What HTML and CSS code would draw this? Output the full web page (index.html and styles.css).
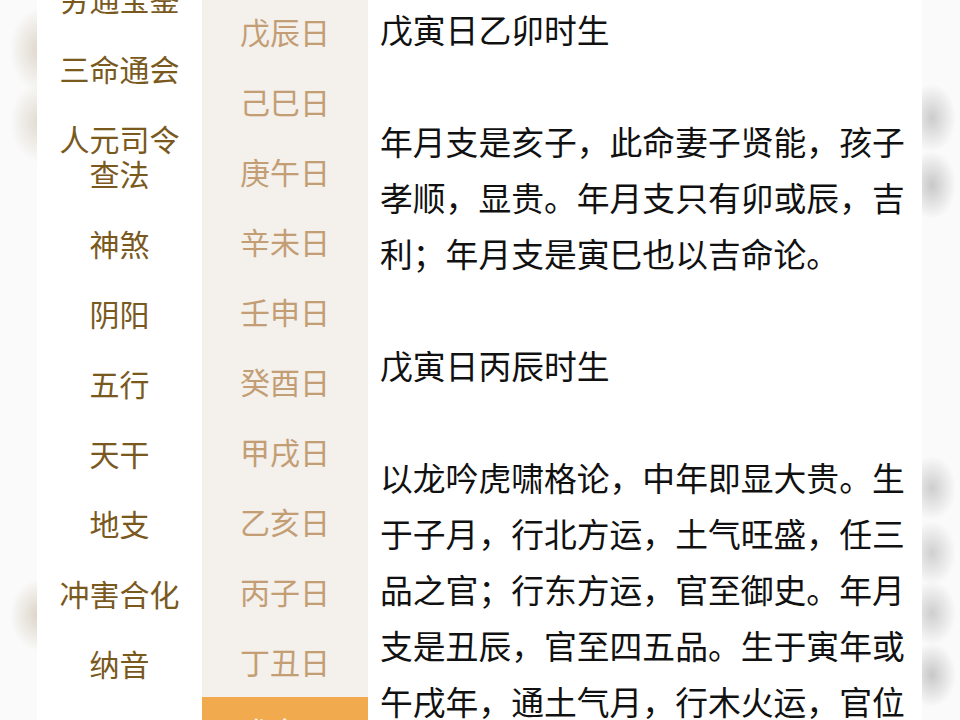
FILE: index.html
```html
<!DOCTYPE html>
<html lang="zh-CN">
<head>
<meta charset="utf-8">
<title>戊寅日</title>
<link rel="stylesheet" href="styles.css">
</head>
<body>
<div class="page">
  <nav class="books">
    <div class="book">穷通宝鉴</div>
    <div class="book">三命通会</div>
    <div class="book">人元司令查法</div>
    <div class="book">神煞</div>
    <div class="book">阴阳</div>
    <div class="book">五行</div>
    <div class="book">天干</div>
    <div class="book">地支</div>
    <div class="book">冲害合化</div>
    <div class="book">纳音</div>
  </nav>
  <nav class="days">
    <div class="day">戊辰日</div>
    <div class="day">己巳日</div>
    <div class="day">庚午日</div>
    <div class="day">辛未日</div>
    <div class="day">壬申日</div>
    <div class="day">癸酉日</div>
    <div class="day">甲戌日</div>
    <div class="day">乙亥日</div>
    <div class="day">丙子日</div>
    <div class="day">丁丑日</div>
    <div class="day active">戊寅日</div>
  </nav>
  <main class="content">
    <p class="line">戊寅日乙卯时生</p>
    <p class="gap"></p>
    <p class="line">年月支是亥子，此命妻子贤能，孩子孝顺，显贵。年月支只有卯或辰，吉利；年月支是寅巳也以吉命论。</p>
    <p class="gap"></p>
    <p class="line">戊寅日丙辰时生</p>
    <p class="gap"></p>
    <p class="line">以龙吟虎啸格论，中年即显大贵。生于子月，行北方运，土气旺盛，任三品之官；行东方运，官至御史。年月支是丑辰，官至四五品。生于寅年或午戌年，通土气月，行木火运，官位显达，富贵双全。</p>
  </main>
</div>
</body>
</html>
```

FILE: styles.css
```css
html, body {
  margin: 0;
  padding: 0;
  height: 720px;
  overflow: hidden;
}

body {
  font-family: "Noto Sans CJK SC", "Noto Sans", sans-serif;
  background:
    radial-gradient(30px 42px at 40px 50px, #ddd6ca, rgba(250,250,250,0)),
    radial-gradient(30px 40px at 40px 122px, #e0dacf, rgba(250,250,250,0)),
    radial-gradient(30px 36px at 40px 615px, #dad2c5, rgba(250,250,250,0)),
    radial-gradient(24px 34px at 932px 118px, #cccccc, rgba(250,250,250,0)),
    radial-gradient(24px 34px at 932px 185px, #c8c8c8, rgba(250,250,250,0)),
    radial-gradient(24px 32px at 932px 488px, #cecece, rgba(250,250,250,0)),
    radial-gradient(24px 32px at 932px 553px, #d0d0d0, rgba(250,250,250,0)),
    radial-gradient(24px 32px at 932px 613px, #cecece, rgba(250,250,250,0)),
    radial-gradient(24px 32px at 932px 675px, #c8c8c8, rgba(250,250,250,0)),
    #fafafa;
}

.page {
  display: flex;
  margin: 0 38px 0 37px;
  height: 720px;
  background: #ffffff;
  overflow: hidden;
}

.books {
  width: 165px;
  flex: none;
  margin-top: -37px;
  color: #7a591e;
  font-size: 30px;
}

.book {
  padding: 17.5px 20px;
  line-height: 35px;
  text-align: center;
}

.days {
  width: 166px;
  flex: none;
  background: #f4f0ec;
  margin-top: -3px;
  color: #c39e74;
  font-size: 30px;
}

.day {
  height: 70px;
  line-height: 68px;
  text-align: center;
}

.day.active {
  background: #f1aa4d;
  color: #ffffff;
}

.content {
  flex: 1;
  padding: 1px 12px 0 12px;
  color: #111111;
  font-size: 32.8px;
  line-height: 56px;
}

.line {
  margin: 0;
}

.gap {
  margin: 0;
  height: 56px;
}
```
